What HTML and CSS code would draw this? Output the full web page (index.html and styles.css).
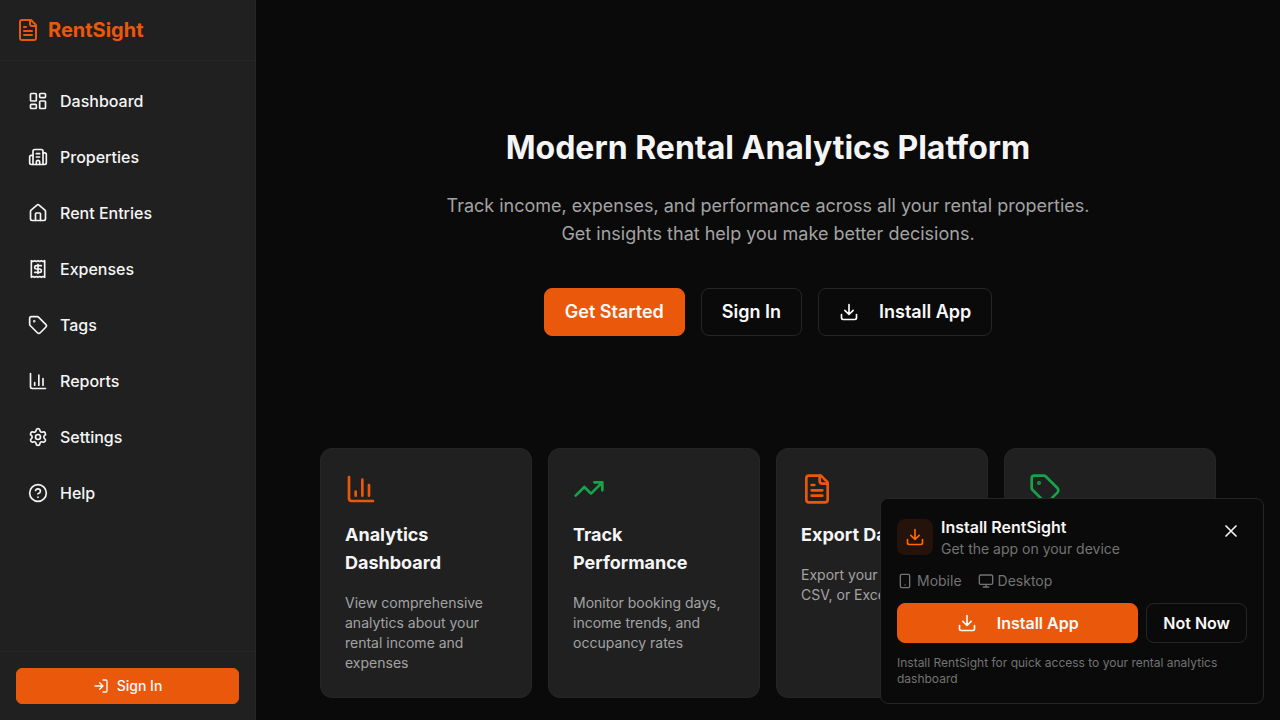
FILE: index.html
```html
<!DOCTYPE html>
<html lang="en">
<head>
<meta charset="utf-8">
<title>RentSight</title>
<link rel="stylesheet" href="styles.css">
</head>
<body>
<svg class="sprite" aria-hidden="true">
  <symbol id="file" viewBox="0 0 24 24"><path d="M15 2H6a2 2 0 0 0-2 2v16a2 2 0 0 0 2 2h12a2 2 0 0 0 2-2V7Z"/><path d="M14 2v4a2 2 0 0 0 2 2h4M10 9H8M16 13H8M16 17H8"/></symbol>
  <symbol id="dashboard" viewBox="0 0 24 24"><rect width="7" height="9" x="3" y="3" rx="1"/><rect width="7" height="5" x="14" y="3" rx="1"/><rect width="7" height="9" x="14" y="12" rx="1"/><rect width="7" height="5" x="3" y="16" rx="1"/></symbol>
  <symbol id="building" viewBox="0 0 24 24"><path d="M10 12h4M10 8h4M14 21v-3a2 2 0 0 0-4 0v3"/><path d="M6 10H4a2 2 0 0 0-2 2v7a2 2 0 0 0 2 2h16a2 2 0 0 0 2-2V9a2 2 0 0 0-2-2h-2"/><path d="M6 21V5a2 2 0 0 1 2-2h8a2 2 0 0 1 2 2v16"/></symbol>
  <symbol id="house" viewBox="0 0 24 24"><path d="M15 21v-8a1 1 0 0 0-1-1h-4a1 1 0 0 0-1 1v8"/><path d="M3 10a2 2 0 0 1 .709-1.528l7-6a2 2 0 0 1 2.582 0l7 6A2 2 0 0 1 21 10v9a2 2 0 0 1-2 2H5a2 2 0 0 1-2-2z"/></symbol>
  <symbol id="receipt" viewBox="0 0 24 24"><path d="M4 2v20l2-1 2 1 2-1 2 1 2-1 2 1 2-1 2 1V2l-2 1-2-1-2 1-2-1-2 1-2-1-2 1Z"/><path d="M16 8h-6a2 2 0 1 0 0 4h4a2 2 0 1 1 0 4H8M12 17.5v-11"/></symbol>
  <symbol id="tag" viewBox="0 0 24 24"><path d="M12.586 2.586A2 2 0 0 0 11.172 2H4a2 2 0 0 0-2 2v7.172a2 2 0 0 0 .586 1.414l8.704 8.704a2.426 2.426 0 0 0 3.42 0l6.58-6.58a2.426 2.426 0 0 0 0-3.42z"/><circle cx="7.5" cy="7.5" r=".5" fill="currentColor"/></symbol>
  <symbol id="chart" viewBox="0 0 24 24"><path d="M3 3v16a2 2 0 0 0 2 2h16M18 17V9M13 17V5M8 17v-3"/></symbol>
  <symbol id="settings" viewBox="0 0 24 24"><path d="M9.671 4.136a2.34 2.34 0 0 1 4.659 0 2.34 2.34 0 0 0 3.319 1.915 2.34 2.34 0 0 1 2.33 4.033 2.34 2.34 0 0 0 0 3.831 2.34 2.34 0 0 1-2.33 4.033 2.34 2.34 0 0 0-3.319 1.915 2.34 2.34 0 0 1-4.659 0 2.34 2.34 0 0 0-3.32-1.915 2.34 2.34 0 0 1-2.33-4.033 2.34 2.34 0 0 0 0-3.831A2.34 2.34 0 0 1 6.35 6.051a2.34 2.34 0 0 0 3.319-1.915"/><circle cx="12" cy="12" r="3"/></symbol>
  <symbol id="help" viewBox="0 0 24 24"><circle cx="12" cy="12" r="10"/><path d="M9.09 9a3 3 0 0 1 5.83 1c0 2-3 3-3 3M12 17h.01"/></symbol>
  <symbol id="login" viewBox="0 0 24 24"><path d="m10 17 5-5-5-5M15 12H3M15 3h4a2 2 0 0 1 2 2v14a2 2 0 0 1-2 2h-4"/></symbol>
  <symbol id="download" viewBox="0 0 24 24"><path d="M12 15V3M21 15v4a2 2 0 0 1-2 2H5a2 2 0 0 1-2-2v-4M7 10l5 5 5-5"/></symbol>
  <symbol id="trend" viewBox="0 0 24 24"><path d="M16 7h6v6M22 7l-8.500 8.500-5-5L2 17"/></symbol>
  <symbol id="phone" viewBox="0 0 24 24"><rect width="14" height="20" x="5" y="2" rx="2"/><path d="M12 18h.01"/></symbol>
  <symbol id="monitor" viewBox="0 0 24 24"><rect width="20" height="14" x="2" y="3" rx="2"/><path d="M8 21h8M12 17v4"/></symbol>
  <symbol id="close" viewBox="0 0 24 24"><path d="M18 6 6 18M6 6l12 12"/></symbol>
</svg>
<div class="app">
  <aside class="sidebar">
    <div class="brand"><svg class="icon icon-lg"><use href="#file"/></svg><span>RentSight</span></div>
    <nav class="nav">
      <a class="nav-item"><svg class="icon"><use href="#dashboard"/></svg>Dashboard</a>
      <a class="nav-item"><svg class="icon"><use href="#building"/></svg>Properties</a>
      <a class="nav-item"><svg class="icon"><use href="#house"/></svg>Rent Entries</a>
      <a class="nav-item"><svg class="icon"><use href="#receipt"/></svg>Expenses</a>
      <a class="nav-item"><svg class="icon"><use href="#tag"/></svg>Tags</a>
      <a class="nav-item"><svg class="icon"><use href="#chart"/></svg>Reports</a>
      <a class="nav-item"><svg class="icon"><use href="#settings"/></svg>Settings</a>
      <a class="nav-item"><svg class="icon"><use href="#help"/></svg>Help</a>
    </nav>
    <div class="sidebar-footer"><button class="btn btn-primary btn-sm"><svg class="icon icon-sm"><use href="#login"/></svg>Sign In</button></div>
  </aside>
  <main class="main">
    <section class="hero">
      <h1 class="hero-title">Modern Rental Analytics Platform</h1>
      <p class="hero-text">Track income, expenses, and performance across all your rental properties. Get insights that help you make better decisions.</p>
      <div class="hero-actions">
        <button class="btn btn-primary btn-lg">Get Started</button>
        <button class="btn btn-outline btn-lg">Sign In</button>
        <button class="btn btn-outline btn-lg"><svg class="icon"><use href="#download"/></svg>Install App</button>
      </div>
    </section>
    <section class="features">
      <article class="card"><svg class="icon icon-xl orange"><use href="#chart"/></svg><h2 class="card-title">Analytics Dashboard</h2><p class="card-text">View comprehensive analytics about your rental income and expenses</p></article>
      <article class="card"><svg class="icon icon-xl green"><use href="#trend"/></svg><h2 class="card-title">Track Performance</h2><p class="card-text">Monitor booking days, income trends, and occupancy rates</p></article>
      <article class="card"><svg class="icon icon-xl orange"><use href="#file"/></svg><h2 class="card-title">Export Data</h2><p class="card-text">Export your data to<br>CSV, or Excel</p></article>
      <article class="card"><svg class="icon icon-xl green"><use href="#tag"/></svg></article>
    </section>
  </main>
</div>
<div class="prompt">
  <div class="prompt-head">
    <div class="prompt-tile"><svg class="icon"><use href="#download"/></svg></div>
    <div class="prompt-heading"><div class="prompt-title">Install RentSight</div><div class="prompt-sub">Get the app on your device</div></div>
    <button class="prompt-close" aria-label="Close"><svg class="icon"><use href="#close"/></svg></button>
  </div>
  <div class="devices">
    <span class="device"><svg class="icon icon-sm"><use href="#phone"/></svg>Mobile</span>
    <span class="device"><svg class="icon icon-sm"><use href="#monitor"/></svg>Desktop</span>
  </div>
  <div class="prompt-actions">
    <button class="btn btn-primary btn-md grow"><svg class="icon"><use href="#download"/></svg>Install App</button>
    <button class="btn btn-outline btn-md">Not Now</button>
  </div>
  <p class="prompt-note">Install RentSight for quick access to your rental analytics dashboard</p>
</div>
</body>
</html>
```
FILE: styles.css
```css
* { box-sizing: border-box; margin: 0; padding: 0; }
body { height: 720px; overflow: hidden; background: #0a0a0a; color: #f5f5f5; font: 400 16px/24px Inter, sans-serif; -webkit-font-smoothing: antialiased; }
.sprite { display: none; }
.icon { width: 20px; height: 20px; flex: none; fill: none; stroke: currentColor; stroke-width: 2; stroke-linecap: round; stroke-linejoin: round; }
.icon-sm { width: 16px; height: 16px; }
.icon-lg { width: 24px; height: 24px; }
.icon-xl { width: 32px; height: 32px; display: block; }
.orange { color: #ea580c; }
.green { color: #16a34a; }
.app { display: flex; height: 720px; }
.sidebar { width: 256px; flex: none; display: flex; flex-direction: column; background: #202020; border-right: 1px solid #262626; }
.brand { display: flex; align-items: center; gap: 8px; padding: 16px; border-bottom: 1px solid #262626; color: #ea580c; font-size: 20px; line-height: 28px; font-weight: 700; }
.nav { flex: 1; display: flex; flex-direction: column; gap: 8px; padding: 16px; }
.nav-item { height: 48px; display: flex; align-items: center; gap: 12px; padding: 0 12px; font-weight: 500; }
.sidebar-footer { padding: 16px; border-top: 1px solid #262626; }
.btn { display: inline-flex; align-items: center; justify-content: center; border: 1px solid #262626; border-radius: 8px; background: transparent; color: #fafafa; font-family: inherit; font-weight: 600; white-space: nowrap; }
.btn-primary { background: #ea580c; border-color: #ea580c; }
.btn-sm { width: 100%; height: 36px; gap: 8px; border-radius: 6px; font-size: 14px; line-height: 20px; font-weight: 500; }
.btn-md { height: 40px; padding: 0 16px; gap: 20px; font-size: 16px; line-height: 24px; }
.btn-lg { height: 48px; padding: 0 20px; gap: 20px; font-size: 18px; line-height: 28px; }
.grow { flex: 1; }
.main { flex: 1; padding: 0 64px; }
.hero { height: 448px; padding-top: 128px; text-align: center; }
.hero-title { font-size: 33px; font-size: 32px; line-height: 40px; font-weight: 700; }
.hero-text { width: 672px; margin: 24px auto 0; color: #a3a3a3; font-size: 18px; line-height: 28px; }
.hero-actions { display: flex; justify-content: center; gap: 16px; margin-top: 40px; }
.features { display: grid; grid-template-columns: repeat(4, 1fr); gap: 16px; }
.card { height: 250px; padding: 24px; background: #202020; border: 1px solid #262626; border-radius: 12px; }
.card-title { margin-top: 16px; font-size: 18px; line-height: 28px; font-weight: 700; }
.card-text { margin-top: 16px; color: #a3a3a3; font-size: 14px; line-height: 20px; }
.prompt { position: fixed; right: 16px; bottom: 16px; width: 384px; padding: 16px; background: #0a0a0a; border: 1px solid #262626; border-radius: 8px; }
.prompt-head { display: flex; align-items: center; gap: 8px; }
.prompt-tile { width: 36px; height: 36px; display: flex; align-items: center; justify-content: center; border-radius: 8px; background: #23130a; color: #ff6900; }
.prompt-heading { flex: 1; }
.prompt-title { font-weight: 600; }
.prompt-sub { color: #737373; font-size: 14px; line-height: 20px; }
.prompt-close { align-self: flex-start; width: 32px; height: 32px; display: flex; align-items: center; justify-content: center; border: 0; background: none; color: #f5f5f5; }
.devices { display: flex; gap: 16px; margin-top: 12px; color: #737373; font-size: 14px; line-height: 20px; }
.device { display: flex; align-items: center; gap: 4px; }
.prompt-actions { display: flex; gap: 8px; margin-top: 12px; }
.prompt-note { margin-top: 12px; color: #737373; font-size: 12px; line-height: 16px; }
```
